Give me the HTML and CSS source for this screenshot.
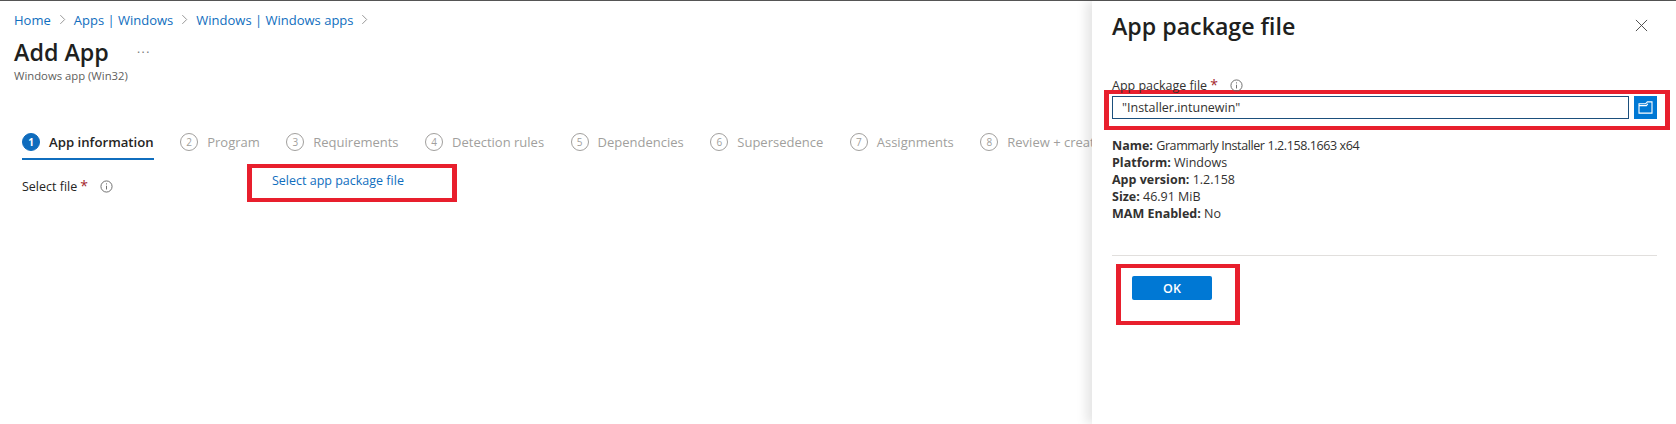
FILE: index.html
```html
<!DOCTYPE html>
<html lang="en">
<head>
    <meta charset="UTF-8">
    <title>Add App</title>
    <link rel="stylesheet" href="styles.css">
</head>
<body>
    <div class="page">
        <div class="main">
            <nav class="crumbs">
                <a href="#">Home</a>
                <svg class="chev" viewBox="0 0 8 12"><path d="M1.5 1l5 5-5 5"/></svg>
                <a href="#">Apps | Windows</a>
                <svg class="chev" viewBox="0 0 8 12"><path d="M1.5 1l5 5-5 5"/></svg>
                <a href="#">Windows | Windows apps</a>
                <svg class="chev" viewBox="0 0 8 12"><path d="M1.5 1l5 5-5 5"/></svg>
            </nav>
            <div class="title-row">
                <h1>Add App</h1>
                <span class="more">...</span>
            </div>
            <div class="subtitle">Windows app (Win32)</div>

            <div class="tabs">
                <div class="tab active"><span class="num">1</span><span>App information</span></div>
                <div class="tab"><span class="num">2</span><span>Program</span></div>
                <div class="tab"><span class="num">3</span><span>Requirements</span></div>
                <div class="tab"><span class="num">4</span><span>Detection rules</span></div>
                <div class="tab"><span class="num">5</span><span>Dependencies</span></div>
                <div class="tab"><span class="num">6</span><span>Supersedence</span></div>
                <div class="tab"><span class="num">7</span><span>Assignments</span></div>
                <div class="tab"><span class="num">8</span><span>Review + create</span></div>
            </div>

            <div class="file-row">
                <div class="file-label">
                    <span>Select file</span><span class="star">*</span>
                    <svg class="info" viewBox="0 0 14 14"><circle cx="7" cy="7" r="6"/><path d="M7 6.2v4M7 3.6v1.2"/></svg>
                </div>
                <div class="mark mark-link"><a href="#">Select app package file</a></div>
            </div>
        </div>

        <aside class="panel">
            <div class="panel-head">
                <h2>App package file</h2>
                <svg class="close" viewBox="0 0 14 14"><path d="M1 1l12 12M13 1L1 13"/></svg>
            </div>
            <div class="panel-label">
                <span>App package file</span><span class="star">*</span>
                <svg class="info" viewBox="0 0 14 14"><circle cx="7" cy="7" r="6"/><path d="M7 6.2v4M7 3.6v1.2"/></svg>
            </div>
            <div class="mark mark-input">
                <input class="file-input" type="text" value="&quot;Installer.intunewin&quot;">
                <button class="browse" type="button">
                    <svg viewBox="0 0 16 14"><path d="M1 13V3h7l2-2h5v12zM1 5h8l1.5-2"/></svg>
                </button>
            </div>
            <div class="details">
                <div><b>Name:</b> <span class="app-name">Grammarly Installer 1.2.158.1663 x64</span></div>
                <div><b>Platform:</b> Windows</div>
                <div><b>App version:</b> 1.2.158</div>
                <div><b>Size:</b> 46.91 MiB</div>
                <div><b>MAM Enabled:</b> No</div>
            </div>
            <div class="panel-foot">
                <div class="mark mark-ok">
                    <button class="ok" type="button">OK</button>
                </div>
            </div>
        </aside>
    </div>
</body>
</html>
```

FILE: styles.css
```css
* {
    box-sizing: border-box;
}
html, body {
    height: 100%;
}
body {
    margin: 0;
    background: #fff;
    color: #252423;
    font-family: "Open Sans", "Noto Sans", Arial, sans-serif;
    font-size: 12.5px;
    overflow: hidden;
}
a {
    color: #106ebe;
    text-decoration: none;
}
.page {
    display: flex;
    height: 424px;
    border-top: 1px solid #555;
}
.main {
    width: 1092px;
    flex: none;
    overflow: hidden;
    padding: 10px 0 0 14px;
}
.crumbs {
    display: flex;
    align-items: center;
    gap: 8px;
    height: 17px;
    font-size: 13px;
    white-space: nowrap;
}
.chev {
    width: 7px;
    height: 11px;
    fill: none;
    stroke: #888;
    stroke-width: 1;
}
.title-row {
    display: flex;
    align-items: center;
    margin-top: 8px;
    height: 32px;
}
h1 {
    margin: 0;
    font-size: 23.3px;
    font-weight: 600;
    color: #201f1e;
}
.more {
    margin: -8px 0 0 28px;
    color: #777;
    font-size: 12px;
    letter-spacing: 1.5px;
}
.subtitle {
    font-size: 11.3px;
    color: #605e5c;
    line-height: 15px;
}
.tabs {
    display: flex;
    gap: 26.5px;
    margin: 44px 0 0 8px;
    white-space: nowrap;
    color: #a19f9d;
    font-size: 13px;
}
.tab {
    display: flex;
    align-items: center;
    gap: 9px;
    height: 33px;
    padding-bottom: 3px;
    flex: none;
}
.tab.active {
    color: #252423;
    font-size: 13.2px;
    font-weight: 600;
    border-bottom: 2px solid #106ebe;
    padding-bottom: 1px;
}
.num {
    width: 18px;
    height: 18px;
    border: 1px solid #a19f9d;
    border-radius: 50%;
    display: flex;
    align-items: center;
    justify-content: center;
    font-size: 10px;
    font-weight: 400;
}
.tab.active .num {
    background: #0f6cbd;
    border-color: #0f6cbd;
    color: #fff;
    font-weight: 700;
}
.file-row {
    display: flex;
    margin: 4px 0 0 8px;
}
.file-label {
    display: flex;
    align-items: center;
    gap: 3px;
    width: 225px;
    height: 18px;
    margin-top: 13px;
    flex: none;
}
.star {
    color: #a4262c;
    font-size: 14px;
    margin-top: -2px;
}
.info {
    width: 13px;
    height: 13px;
    margin-left: 9px;
    fill: none;
    stroke: #666;
    stroke-width: 1;
}
/* red annotation boxes */
.mark {
    border: 4px solid #e81f2d;
    border-left-width: 5px;
    border-right-width: 5px;
}
.mark-link {
    width: 210px;
    height: 38px;
    padding: 4px 0 0 20px;
}
.panel {
    width: 584px;
    flex: none;
    height: 423px;
    padding-left: 20px;
    box-shadow: -6px 0 10px rgba(0, 0, 0, 0.1);
}
.panel-head {
    display: flex;
    justify-content: space-between;
    align-items: center;
    height: 49px;
    padding-right: 28px;
}
h2 {
    margin: 0;
    font-size: 23.2px;
    font-weight: 600;
    color: #201f1e;
}
.close {
    width: 13px;
    height: 13px;
    fill: none;
    stroke: #444;
    stroke-width: 1;
}
.panel-label {
    display: flex;
    align-items: center;
    gap: 3px;
    height: 18px;
    margin-top: 26px;
    color: #323130;
}
.mark-input {
    display: flex;
    align-items: flex-start;
    gap: 5px;
    width: 566px;
    height: 40px;
    margin: -4px 0 0 -8px;
    padding: 2px 8px 0 3px;
}
.file-input {
    width: 517px;
    height: 23px;
    flex: none;
    border: 1px solid #1b4f7c;
    padding: 0 9px;
    font: inherit;
    color: #323130;
    outline: none;
}
.browse {
    width: 23px;
    height: 23px;
    flex: none;
    border: none;
    padding: 0;
    background: #0078d4;
    display: flex;
    align-items: center;
    justify-content: center;
}
.browse svg {
    width: 15px;
    height: 13px;
    fill: none;
    stroke: #fff;
    stroke-width: 1.2;
}
.details {
    margin-top: 7px;
    line-height: 17px;
    color: #323130;
}
.details b {
    font-weight: 700;
}
.app-name {
    letter-spacing: -0.4px;
}
.panel-foot {
    margin: 33px 19px 0 0;
    border-top: 1px solid #e1dfdd;
    padding-top: 8px;
}
.mark-ok {
    width: 124px;
    height: 61px;
    margin-left: 4px;
    padding: 8px 0 0 11px;
}
.ok {
    width: 80px;
    height: 24px;
    border: none;
    border-radius: 2px;
    background: #0078d4;
    color: #fff;
    font: 600 12.5px "Open Sans", "Noto Sans", Arial, sans-serif;
    padding: 0;
}
```
